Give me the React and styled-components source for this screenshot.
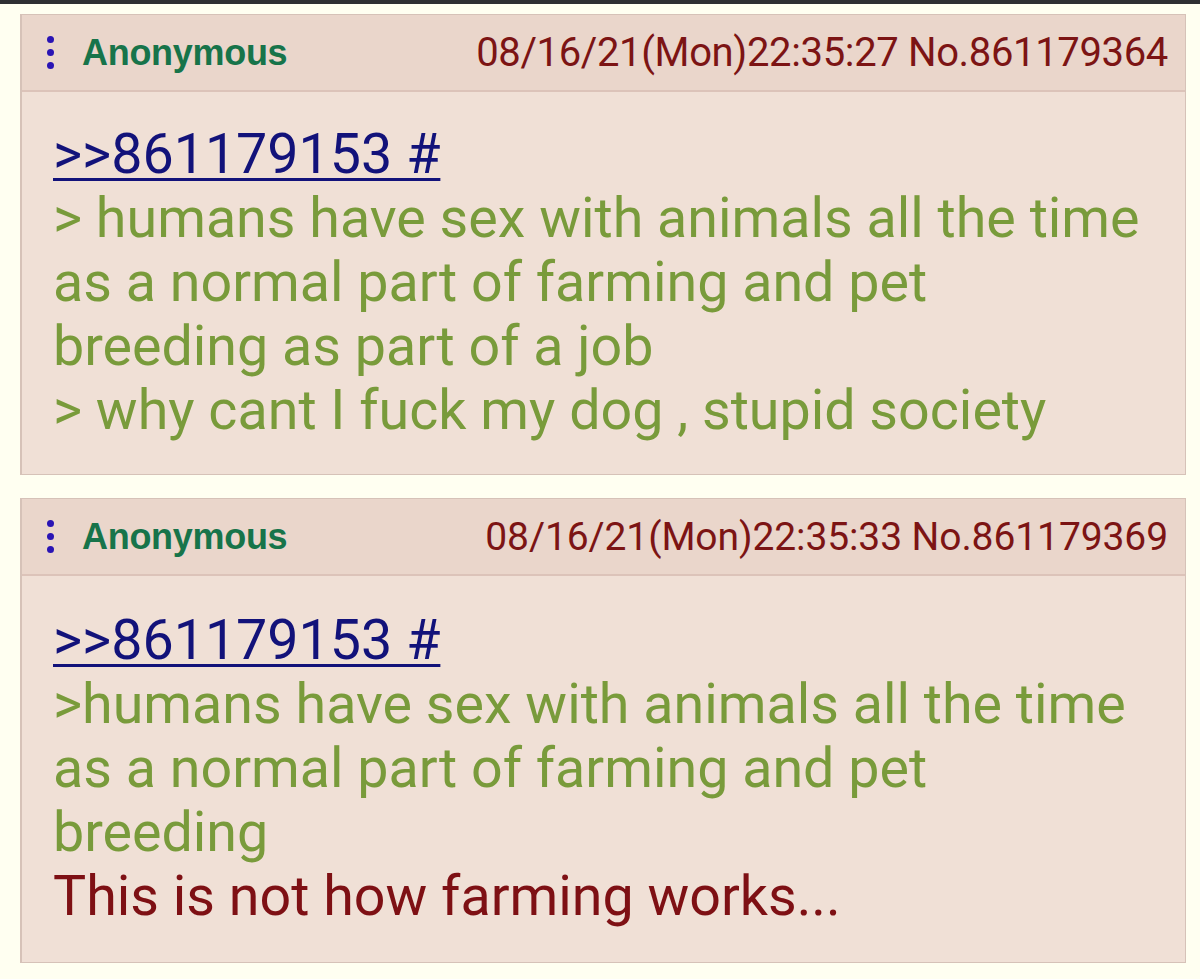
import React from 'react';
import styled, { createGlobalStyle } from 'styled-components';

const GlobalStyle = createGlobalStyle`
  html, body {
    margin: 0;
    padding: 0;
    background: #fffff1;
  }
  body {
    font-family: Roboto, "Liberation Sans", Arial, sans-serif;
  }
`;

const Page = styled.div`
  width: 1200px;
  min-height: 979px;
  background: #fffff1;
  border-top: 4px solid #2e2f33;
  box-sizing: border-box;
  padding: 10px 14px 0 20px;
  display: flex;
  flex-direction: column;
  gap: 23px;
`;

const Card = styled.div`
  background: #f0e0d6;
  border: 1px solid #d6c2b8;
  border-left-width: 2px;
  box-sizing: border-box;
`;

const Header = styled.div`
  height: 77px;
  background: #ead6cb;
  border-bottom: 2px solid #dcc3b9;
  display: flex;
  align-items: center;
  padding: 0 17px 0 25px;
  box-sizing: border-box;
`;

const Dots = styled.div`
  display: flex;
  flex-direction: column;
  gap: 6px;
  margin-right: 28px;

  span {
    width: 7px;
    height: 7px;
    border-radius: 50%;
    background: #2a14b4;
  }
`;

const Name = styled.span`
  font-family: "Liberation Sans", Arial, sans-serif;
  font-weight: bold;
  font-size: 36px;
  color: #17744a;
  letter-spacing: -0.3px;
`;

const Stamp = styled.span`
  margin-left: auto;
  font-size: ${(p) => p.$size}px;
  color: #7c1414;
  letter-spacing: ${(p) => p.$spacing}px;
`;

const Body = styled.div`
  padding: ${(p) => p.$top}px 20px ${(p) => p.$bottom}px 31px;
  font-size: 55.6px;
  line-height: 64px;
`;

const Line = styled.div`
  color: ${(p) => p.$color};
  white-space: nowrap;
`;

const Quote = styled.a`
  color: #12127a;
  text-decoration: underline;
  text-decoration-thickness: 3px;
  text-underline-offset: 5px;
`;

const GREEN = '#799b3b';
const RED = '#7e1014';

const posts = [
  {
    no: '08/16/21(Mon)22:35:27 No.861179364',
    size: 40,
    spacing: -0.35,
    top: 30,
    bottom: 32,
    lines: [
      { text: '> humans have sex with animals all the time', color: GREEN },
      { text: 'as a normal part of farming and pet', color: GREEN },
      { text: 'breeding as part of a job', color: GREEN },
      { text: '> why cant I fuck my dog , stupid society', color: GREEN },
    ],
  },
  {
    no: '08/16/21(Mon)22:35:33 No.861179369',
    size: 39,
    spacing: -0.1,
    top: 32,
    bottom: 34,
    lines: [
      { text: '>humans have sex with animals all the time', color: GREEN },
      { text: 'as a normal part of farming and pet', color: GREEN },
      { text: 'breeding', color: GREEN },
      { text: 'This is not how farming works...', color: RED },
    ],
  },
];

const Post = ({ post }) => (
  <Card>
    <Header>
      <Dots>
        <span />
        <span />
        <span />
      </Dots>
      <Name>Anonymous</Name>
      <Stamp $size={post.size} $spacing={post.spacing}>{post.no}</Stamp>
    </Header>
    <Body $top={post.top} $bottom={post.bottom}>
      <Line>
        <Quote href="#p861179153">&gt;&gt;861179153 #</Quote>
      </Line>
      {post.lines.map((l, i) => (
        <Line key={i} $color={l.color}>{l.text}</Line>
      ))}
    </Body>
  </Card>
);

export default function App() {
  return (
    <>
      <GlobalStyle />
      <Page>
        {posts.map((p) => (
          <Post key={p.no} post={p} />
        ))}
      </Page>
    </>
  );
}
